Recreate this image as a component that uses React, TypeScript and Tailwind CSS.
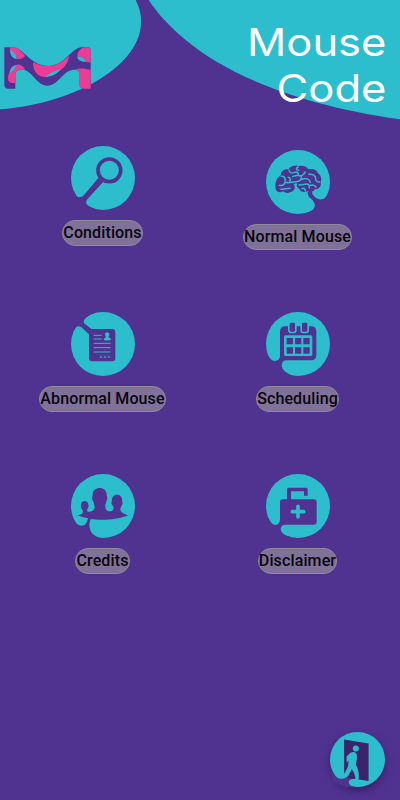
import React from 'react'

type MenuItem = {
  label: string;
  icon: React.ReactNode;
  className?: string;
}

const TEAL = '#2dbecd'
const PURPLE = '#503291'
const PINK = '#eb3c96'

function ConditionsIcon() {
  return (
    <svg viewBox="92 34 192 192" className="size-16">
      <circle cx="188" cy="130" r="96" fill={TEAL} />
      <circle cx="207" cy="107" r="34" fill="none" stroke={PURPLE} strokeWidth="11" />
      <path d="M174 130L188 142L144 191C138 197 137 201 138 206C141 214 155 220 170 225L140 228L88 200L101 170C106 189 119 193 131 181Z" fill={PURPLE} />
    </svg>
  )
}

function BrainIcon() {
  return (
    <svg viewBox="91 46 192 192" className="size-16">
      <circle cx="187" cy="142" r="96" fill={TEAL} />
      <path d="M216 171C216 181 218 186 226 192C237 201 240 212 235 220C231 229 217 234 203 238L240 240L288 200L278 172C271 198 250 199 237 186C231 180 228 178 230 170Z" fill={PURPLE} />
      <path d="M120 162C116 145 124 128 136 121C135 110 145 103 158 104C164 93 180 90 190 94C204 91 215 97 218 104C232 100 244 105 247 116C258 123 258 137 255 143C258 155 249 165 237 164C233 173 222 174 215 170C204 174 193 171 191 162C183 158 182 152 184 146C178 147 173 148 173 148C182 156 177 171 164 172C156 178 147 174 143 170C134 175 122 173 120 162Z" fill={PURPLE} />
      <g fill="none" stroke={TEAL} strokeWidth="4.5" strokeLinecap="round">
        <path d="M131 152C140 154 147 149 149 142C160 148 170 140 181 141C192 141 198 134 197 126" />
        <path d="M137 125C145 124 150 129 148 139M162 142C166 137 164 130 158 128" />
        <path d="M160 106C161 114 168 117 176 113C184 110 190 115 188 122C197 126 206 120 208 112" />
        <path d="M187 97C180 101 181 107 189 107M171 126C175 123 181 124 187 122" />
        <path d="M197 135C210 128 222 133 224 143" />
        <path d="M220 119C230 117 240 123 240 132C240 139 246 142 252 142" />
        <path d="M190 151C200 151 206 149 211 148C219 147 221 152 221 159M221 153C230 149 239 152 241 158" />
        <path d="M136 164C145 165 154 160 163 161M209 168C208 161 203 160 199 162" />
      </g>
    </svg>
  )
}

function RecordIcon() {
  return (
    <svg viewBox="107 37 192 192" className="size-16">
      <circle cx="203" cy="133" r="96" fill={TEAL} />
      <path d="M110 105C116 80 131 73 143 87L161 104V176Q161 185 170 185H231Q240 185 240 176V97Q240 88 231 88H168L150 74C144 70 144 64 148 59C154 51 165 44 178 39L140 34L100 76Z" fill={PURPLE} />
      <g stroke={TEAL} strokeWidth="3">
        <path d="M175 107H199M175 118H199M175 131H226M175 144H226M175 157H226" />
        <path strokeWidth="2" d="M193 168l7 7m0-7l-7 7M205 168l7 7m0-7l-7 7M217 168l7 7m0-7l-7 7" />
      </g>
      <path d="M209 104C209 96 222 96 222 104C222 108 220 110 219 112C220 115 227 115 227 119C227 124 205 124 205 119C205 115 211 115 212 112C211 110 209 108 209 104Z" fill={TEAL} />
    </svg>
  )
}

function CalendarIcon() {
  return (
    <svg viewBox="91 37 192 192" className="size-16">
      <circle cx="187" cy="133" r="96" fill={TEAL} />
      <path d="M133 170V96Q133 80 149 80H226Q242 80 242 96V166Q242 182 226 182H152C142 182 136 190 139 202C142 214 156 222 172 228L130 230L86 196L99 168C107 191 132 187 133 170Z" fill={PURPLE} />
      <rect x="145" y="107" width="85" height="62" rx="5" fill={TEAL} />
      <path d="M153 115h19v19h-19zM178 115h19v19h-19zM203 115h19v19h-19zM153 143h19v19h-19zM178 143h19v19h-19zM203 143h19v19h-19z" fill={PURPLE} />
      <rect x="157" y="63" width="26" height="38" rx="9" fill={TEAL} />
      <rect x="194" y="63" width="26" height="38" rx="9" fill={TEAL} />
      <rect x="162" y="69" width="16" height="27" rx="4" fill={PURPLE} />
      <rect x="199" y="69" width="16" height="27" rx="4" fill={PURPLE} />
    </svg>
  )
}

function PeopleIcon() {
  return (
    <svg viewBox="92 28 192 192" className="size-16">
      <circle cx="188" cy="124" r="96" fill={TEAL} />
      <path d="M111 152C121 150 128 147 128 142C128 137 125 136 124 132C120 126 121 120 123 117C123 106 143 106 143 117C146 122 145 128 142 132C140 136 139 139 143 141C151 143 163 138 163 128C163 121 160 118 159 110C154 104 155 97 157 93C154 62 202 62 199 93C202 98 201 105 198 110C197 117 194 121 195 128C196 139 207 142 213 139C221 136 221 130 218 124C213 119 212 113 215 109C212 84 249 84 245 109C248 114 247 120 243 124C240 130 238 136 243 141C248 146 256 149 264 152C244 160 224 164 196 165C177 166 164 164 151 163C147 172 146 184 149 194C153 208 165 215 180 221L140 222L94 200L97 158C108 187 129 187 136 177C140 172 142 168 143 161C132 159 121 156 111 152Z" fill={PURPLE} />
    </svg>
  )
}

function MedkitIcon() {
  return (
    <svg viewBox="91 28 192 192" className="size-16">
      <circle cx="187" cy="124" r="96" fill={TEAL} />
      <path d="M133 166V112Q133 104 141 104H154V74Q154 69 159 69H211Q216 69 216 74V93H205V80H166V104H235Q243 104 243 112V172Q243 180 235 180H150C138 180 133 188 136 198C140 209 156 215 172 219L130 222L84 190L99 160C109 188 131 185 133 166Z" fill={PURPLE} />
      <path d="M187 125V157M170 141H204" stroke={TEAL} strokeWidth="11" strokeLinecap="round" />
    </svg>
  )
}

function ExitIcon() {
  return (
    <svg viewBox="30 35 164 164" className="size-[55px]">
      <circle cx="112" cy="117" r="82" fill={TEAL} />
      <path d="M63 174C76 173 81 160 85 145L96 148L106 175C96 173 85 177 86 186C88 194 98 198 110 199L84 202L40 184L28 135C36 160 50 174 63 174Z" fill={PURPLE} />
      <path d="M72 57L145 69V181L112 176L88 173L72 168Z" fill="#3c236e" />
      <circle cx="107" cy="84" r="9" fill={TEAL} />
      <path d="M91 97C96 93 106 94 109 100C112 108 110 120 107 132C114 145 118 158 115 178H106C105 164 102 154 94 145C89 158 84 172 69 174L58 173C72 165 77 151 84 137L85 119L80 127L79 109Z" fill={TEAL} />
    </svg>
  )
}

const leftItems: MenuItem[] = [
  { label: 'Conditions', icon: <ConditionsIcon />, className: 'h-[166px]' },
  { label: 'Abnormal Mouse', icon: <RecordIcon />, className: 'h-[162px]' },
  { label: 'Credits', icon: <PeopleIcon /> },
]

const rightItems: MenuItem[] = [
  { label: 'Normal Mouse', icon: <BrainIcon />, className: 'h-[162px] mt-1' },
  { label: 'Scheduling', icon: <CalendarIcon />, className: 'h-[162px]' },
  { label: 'Disclaimer', icon: <MedkitIcon /> },
]

function MenuColumn({ items }: { items: MenuItem[] }) {
  return (
    <div className="flex flex-1 flex-col">
      {items.map((item) => (
        <button key={item.label} className={`flex flex-col items-center ${item.className ?? ''}`}>
          {item.icon}
          <span className="mt-[9.5px] flex h-[26px] items-center rounded-full border border-[#918a98] bg-[#7f7198] text-base leading-none font-medium tracking-[0.12px] whitespace-nowrap text-[#08050e]">
            {item.label}
          </span>
        </button>
      ))}
    </div>
  )
}

function Logo() {
  return (
    <g>
      <path d="M13 142H40C70 142 90 198 145 198C195 198 215 142 245 142H262Q272 142 272 152V266H250Q239 266 239 255V225Q238 209 222 209C190 209 175 257 142 257C110 257 95 209 68 209Q46 209 46 225V266H25Q13 266 13 254Z" fill={PURPLE} />
      <g fill={PINK}>
        <path d="M30 142H40C55 142 65 155 76 168C70 174 60 178 50 178C50 165 42 155 30 152Z" />
        <path d="M24 235C24 215 40 200 50 194C60 192 70 198 76 210C60 207 46 212 46 225V249H35C28 249 24 243 24 235Z" />
        <path d="M99 187C112 193 125 198 145 198C170 198 190 182 208 167C204 190 190 210 165 218C150 223 142 228 137 231C115 232 98 215 99 187Z" />
        <path d="M232 170C232 152 245 142 258 142Q272 142 272 152V187C262 186 258 185 256 185C254 175 245 168 232 170Z" />
        <path d="M226 208C240 203 258 206 272 210V266H250Q239 266 239 255V228C239 218 234 212 226 208Z" />
      </g>
      <g fill={TEAL}>
        <path d="M30 150C42 153 50 165 50 177C38 176 30 165 30 150Z" />
        <path d="M29 218C30 205 38 196 50 195C46 203 40 213 29 218Z" />
        <path d="M137 231C145 218 165 214 183 207C172 222 155 230 137 231Z" />
        <path d="M232 170C245 168 255 176 257 186C243 184 232 180 232 170Z" />
      </g>
    </g>
  )
}

export default function App() {
  return (
    <div className="relative flex h-[800px] w-[400px] flex-col overflow-hidden bg-[#503291] font-['Roboto',sans-serif]">
      <header className="relative h-[146px]">
        <svg viewBox="0 0 1200 438" className="absolute inset-0 h-[146px] w-[400px]">
          <path d="M0 0H407C417 20 424 40 423 68C422 190 240 308 0 328Z" fill={TEAL} />
          <path d="M446 0C525 118 715 288 1200 358V0Z" fill={TEAL} />
          <Logo />
        </svg>
        <h1 className="relative origin-right scale-x-[1.13] pt-[19px] pr-3 text-right font-['Inter',sans-serif] text-[38.5px] leading-[46px] text-white">
          Mouse
          <br />
          Code
        </h1>
      </header>

      <main className="flex px-[5px]">
        <MenuColumn items={leftItems} />
        <MenuColumn items={rightItems} />
      </main>

      <button className="absolute right-[15px] bottom-[13.5px] rounded-full shadow-[0_4px_8px_rgba(0,0,0,0.35)]" aria-label="Exit">
        <ExitIcon />
      </button>
    </div>
  )
}
